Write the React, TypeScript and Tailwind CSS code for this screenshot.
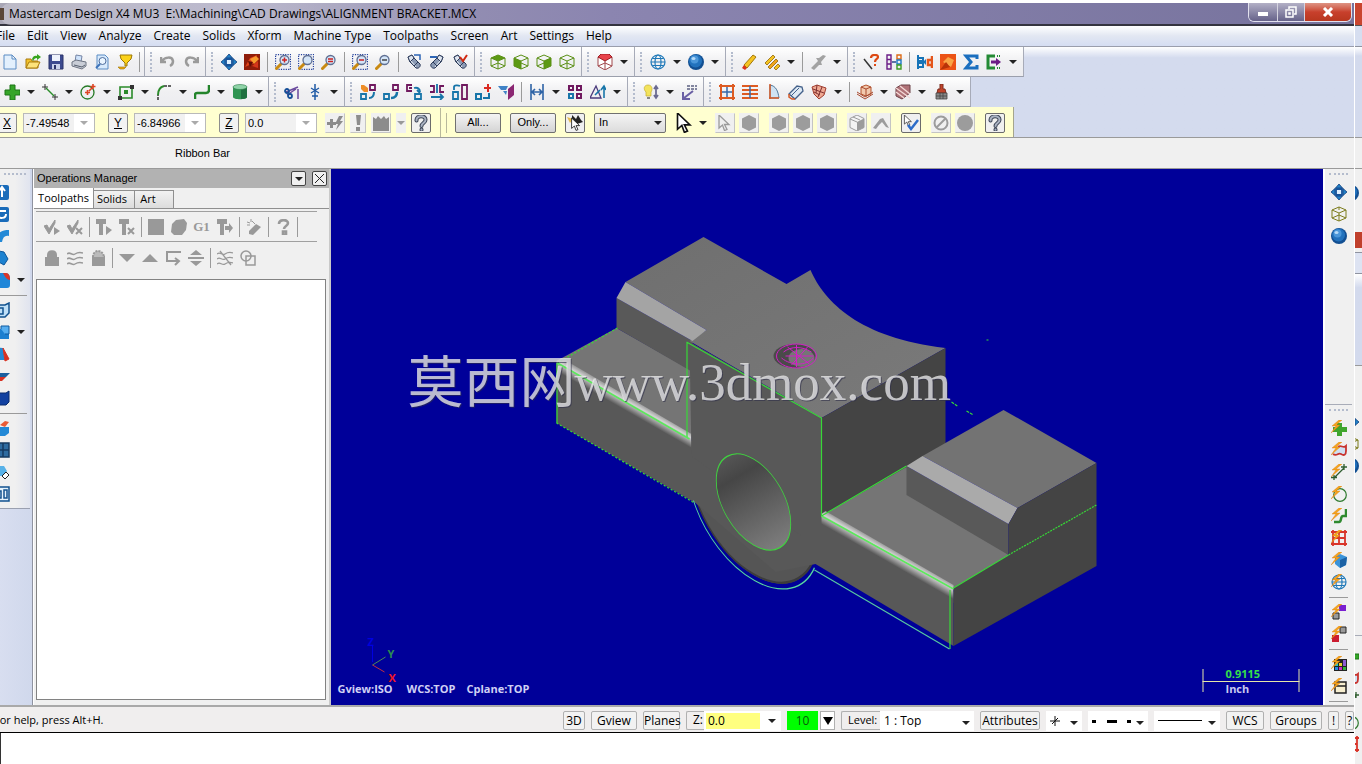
import type { ReactNode } from "react";
import clsx from "clsx";

/* ---------- icon drawings, all on a 16 x 16 grid ---------- */

const magnifier = (
  <>
    <path d="M6 10 1.5 14.500" stroke="#c98a12" strokeWidth="3" strokeLinecap="round" />
    <circle cx="9.500" cy="6" r="4.500" fill="#d3e4f7" stroke="#5f6f92" strokeWidth="1.300" />
  </>
);

const marquee = <path d="M.5 .5h15v15H.5z" fill="none" stroke="#23409c" strokeWidth="1.300" strokeDasharray="1.200 1.200" />;

const flashlight = (
  <>
    <path d="m2 3 4-2 2 3 6 6c1 2-1 5-4 4L4 8z" fill="#8b9ab4" stroke="#2f3d5c" />
    <path d="m2 3 2 5 4-4-2-3z" fill="#dfe6f0" stroke="#2f3d5c" />
    <path d="m5 7 5 6" stroke="#e6ebf2" />
    <path d="m8 12 4-4" stroke="#2f3d5c" />
  </>
);

const cubeWire = "M8 1 15 4v8l-7 3-7-3V4zM1 4l7 3 7-3M8 7v8";
const hexagon = "M8 0 15 3.500v9L8 16l-7-3.500v-9z";
const bolt = <path d="M8 0 1 6h4L0 13l9-8H5l6-5z" fill="#f5a51c" stroke="#d87a10" strokeWidth=".4" />;
const globe = (
  <g fill="none" stroke="#1e78b8" strokeWidth="1.200">
    <circle cx="8" cy="8" r="7" />
    <ellipse cx="8" cy="8" rx="3" ry="7" />
    <path d="M1 8h14M2.500 4.500h11M2.500 11.500h11" />
  </g>
);
const sphere = (
  <>
    <circle cx="8" cy="8" r="8" fill="#124f92" />
    <circle cx="7.500" cy="7" r="6.500" fill="#2272bd" />
    <circle cx="6.500" cy="5.500" r="4" fill="#4b97da" />
    <ellipse cx="5.500" cy="4.500" rx="2" ry="1.500" fill="#b5daf7" />
  </>
);
const fourWay = (
  <g fill="#2382c8" stroke="#123f7c" strokeWidth=".8">
    <path d="m8 0 3.500 4h-7zM8 16l3.500-4h-7zM0 8l4-3.500v7zM16 8l-4-3.500v7z" />
    <path d="M5 5h6v6H5z" fill="#dff0ff" stroke="#17539a" strokeWidth="1.800" />
  </g>
);
const question = (
  <g fill="none" strokeLinecap="round">
    <path d="M3.500 5.500C3 0 13 0 12.500 5c0 3-4 3-4 6" stroke="#3d4656" strokeWidth="4" />
    <path d="M8.500 14.500v.2" stroke="#3d4656" strokeWidth="4" />
    <path d="M3.500 5.500C3 0 13 0 12.500 5c0 3-4 3-4 6" stroke="#a9b2c2" strokeWidth="2" />
    <path d="M8.500 14.500v.2" stroke="#a9b2c2" strokeWidth="2" />
  </g>
);
const cursor = "M2 0v13l3.500-3 2 5.500 2.500-1-2.500-5h4.500z";

const icons: Record<string, ReactNode> = {
  new: <path d="M2 1h8l4 4v10H2zM10 1v4h4" fill="#e3f0fd" stroke="#5b8cc4" />,
  open: (
    <>
      <path d="M1 14V5h5l1 2h6v7z" fill="#f3c22b" stroke="#a97a0c" />
      <path d="m1 14 3-6h11l-3 6z" fill="#fde27a" stroke="#a97a0c" />
      <path d="M7 5c1-3 3-4 5-3V0l4 3-4 3V4c-2 0-3 1-4 3z" fill="#37a51e" />
    </>
  ),
  save: (
    <>
      <path d="M1 1h14v14H1z" fill="#3c4a8f" stroke="#2a3269" />
      <path d="M4 1h8v6H4z" fill="#eef2fb" />
      <path d="M4 10h8v5H4z" fill="#c9d1ea" />
      <path d="M6 11h2v4H6z" fill="#2a3269" />
    </>
  ),
  print: (
    <>
      <path d="m5 1 6 1-1 6H4z" fill="#cfe3fb" stroke="#7585a5" />
      <path d="m1 8 4-2 10 2v4l-4 3-10-3z" fill="#c9cdd6" stroke="#6d7482" />
      <path d="m3 11 8 2 3-2" stroke="#555d6c" fill="none" />
    </>
  ),
  preview: (
    <>
      <path d="M3 1h8l3 3v11H3z" fill="#d8eafc" stroke="#5b8cc4" />
      <circle cx="8.500" cy="7" r="3.500" fill="#eaf5ff" stroke="#4e6d9d" />
      <path d="m6 10-4 4" stroke="#3e73b9" strokeWidth="2" />
    </>
  ),
  trophy: (
    <>
      <path d="M3 1h12l-1 4-4 4v3H8V9L4 5z" fill="#fbd21a" stroke="#9c7605" />
      <path d="M1 13h8l-2 2H3z" fill="#f0a80f" stroke="#9c7605" strokeWidth=".6" />
    </>
  ),
  undo: <path d="M1 3v5h5M2 7c3-4 10-5 11 0 0 2-1 4-3 5" fill="none" stroke="#9a9a9a" strokeWidth="2.500" />,
  redo: <path d="M15 3v5h-5m4-1C11 3 4 2 3 7c0 2 1 4 3 5" fill="none" stroke="#9a9a9a" strokeWidth="2.500" />,
  fourWay,
  redTile: (
    <>
      <path d="M0 0h16v16H0z" fill="#8f1d0a" />
      <path d="M1 13 6 4l7-3-3 8z" fill="#e2431a" />
      <path d="m6 5 6-3 3 3-5 5z" fill="#f79a2d" />
      <path d="m8 12 6-5v7z" fill="#d5361a" />
      <path d="m4 7 5 1-3 5z" fill="#5e0e05" />
    </>
  ),
  zoomWin: <>{marquee}{magnifier}<path d="M7 6h5M9.500 3.500v5" stroke="#c22" strokeWidth="1.500" /></>,
  zoomSel: <>{marquee}{magnifier}</>,
  zoomFit: <>{magnifier}<path d="M7 5h5M7 7.500h5" stroke="#c22" strokeWidth="1.500" /></>,
  unzoom: <>{marquee}{magnifier}<path d="M7 6h5" stroke="#c22" strokeWidth="1.500" /></>,
  zoomOut: <>{magnifier}<path d="M7 6h5" stroke="#444" strokeWidth="1.500" /></>,
  lightA: <>{flashlight}<path d="M8 1h6v5" stroke="#2e66b5" fill="none" strokeWidth="1.500" /></>,
  lightB: <g transform="matrix(-1 0 0 1 16 0)">{flashlight}<path d="M8 3h7" stroke="#2e66b5" strokeWidth="2" /></g>,
  lightC: <>{flashlight}<path d="m8 3 3 4 4-6" stroke="#d12a12" fill="none" strokeWidth="2" /></>,
  cubeTop: <><path d="m8 1 7 3-7 3-7-3z" fill="#5d9a13" /><path d={cubeWire + "M1 12l7-3 7 3"} fill="none" stroke="#5a8f14" /></>,
  cubeLeft: <><path d="m1 4 7 3v8l-7-3z" fill="#5d9a13" /><path d={cubeWire + "M8 9l7 3"} fill="none" stroke="#5a8f14" /></>,
  cubeRight: <><path d="m15 4-7 3v8l7-3z" fill="#5d9a13" /><path d={cubeWire + "M8 9l-7 3"} fill="none" stroke="#5a8f14" /></>,
  cubeIso: <path d={cubeWire + "M1 12l7-3 7 3"} fill="none" stroke="#5a8f14" />,
  cubeOlive: <path d={cubeWire + "M8 1v3M1 12l7-3 7 3"} fill="none" stroke="#7c7c1c" />,
  cplane: (
    <>
      <path d="M1 3h14v9l-7 4-7-4zM8 7v9M1 12l7-3 7 3" fill="#fff" stroke="#a0474b" />
      <path d="m4 0h8l3 3-7 4-7-4z" fill="#e8434b" stroke="#9c1b21" />
    </>
  ),
  globe,
  sphere,
  eraser: (
    <>
      <path d="M3 11 12 1l3 2-9 11z" fill="#f5c422" stroke="#a4780a" />
      <path d="m1 14 2-3 3 3-2 2z" fill="#d9341c" />
    </>
  ),
  erasers: (
    <g stroke="#8f6409" strokeWidth=".8">
      <path d="m1 9 8-8 2 2-8 8z" fill="#f5c422" />
      <path d="m4 13 8-8 2 2-8 8z" fill="#f1a41a" />
      <path d="m10 14 4-4 2 2-4 4z" fill="#f5c422" />
    </g>
  ),
  eraserGrey: <path d="M1 14 8 7 6 4h3l4-3 3 1-5 6 1 3H9l-5 5z" fill="#a2a2a2" />,
  lineAsk: (
    <>
      <path d="m1 5 8 10" stroke="#333" strokeWidth="1.500" />
      <path d="M8 4c0-4 7-4 7-1 0 2-3 2-3 5" fill="none" stroke="#dd4914" strokeWidth="2.200" />
      <path d="M11 10h2v2h-2z" fill="#dd4914" />
    </>
  ),
  tables: (
    <g fill="none" strokeWidth="1.400">
      <path d="M1 1h4v14H1zM1 5.500h4M1 10h4" stroke="#6b1d86" />
      <path d="M11 1h4v4h-4z" stroke="#dd6a14" />
      <path d="M11 6h4v4h-4z" stroke="#1b78c4" />
      <path d="M11 11h4v4h-4z" stroke="#3c9b22" />
      <path d="M6 8h4" stroke="#1b3d84" />
    </g>
  ),
  levels: (
    <>
      <path d="M1 1v14M1 4h5v3H1M1 9h5v4H1" stroke="#1774b8" strokeWidth="2" fill="none" />
      <path d="M15 2v12M15 6h-4v5h4" stroke="#e4551b" strokeWidth="2.500" fill="none" />
      <path d="m6 8 3-3v6z" fill="#1774b8" />
    </>
  ),
  orangeTile: (
    <>
      <path d="M0 0h16v16H0z" fill="#ec5316" />
      <path d="m3 8 5-5 6 3-3 7z" fill="#f9a445" />
      <path d="m0 16 6-8 4 5z" fill="#b93308" />
    </>
  ),
  sigma: <path d="M14 5V2H3l5 6-5 6h11v-3" fill="none" stroke="#1b6fbf" strokeWidth="3" />,
  exportC: (
    <>
      <path d="M9 2H2v12h7" fill="none" stroke="#238a34" strokeWidth="3" />
      <path d="M5 8h6" stroke="#6b1d86" strokeWidth="3" />
      <path d="m10 4 5 4-5 4z" fill="#6b1d86" />
      <path d="M11 2h4M11 14h4" stroke="#238a34" strokeWidth="2" strokeDasharray="1 1" />
    </>
  ),

  plus: <path d="M6 1h5v5h5v5h-5v5H6v-5H1V6h5z" fill="#35a528" stroke="#1c7416" />,
  line: (
    <g stroke="#333" fill="none">
      <path d="M3 0v6M0 3h6M13 10v6M10 13h6" />
      <path d="m4 4 8 8" stroke="#2b8c2b" strokeWidth="1.500" />
    </g>
  ),
  arc: (
    <>
      <circle cx="7.500" cy="8.500" r="6.500" fill="none" stroke="#267a26" strokeWidth="1.300" />
      <path d="M7.500 6v5M5 8.500h5M13 0v5M10.500 2.500h5M9 7l3-3" stroke="#de4424" strokeWidth="1.600" />
    </>
  ),
  rect: (
    <>
      <path d="M2 3h12v11H2z" fill="none" stroke="#2a8a2a" strokeWidth="1.600" />
      <path d="M6 6h4v4H6z" fill="#2a8a2a" />
      <path d="M12 1h4v4h-4zM0 12h4v4H0z" fill="#333" />
    </>
  ),
  fillet: (
    <>
      <path d="M2 16v-5M8 2h8" stroke="#333" strokeWidth="1.500" strokeDasharray="3 1" />
      <path d="M2 11c0-5 2-8 6-9" fill="none" stroke="#2a8a2a" strokeWidth="2" />
    </>
  ),
  spline: <path d="M1 15v-4c0-1 0-2 2-2h9c2 0 3-1 3-3V1" fill="none" stroke="#23842b" strokeWidth="2.500" />,
  cylinder: (
    <>
      <path d="M1 3v10c0 3 14 3 14 0V3z" fill="#2f9452" />
      <path d="M9 4h6v9c0 1-2 2-6 2z" fill="#1f7040" />
      <ellipse cx="8" cy="3" rx="7" ry="2.500" fill="#8fd3a8" stroke="#2c7a49" strokeWidth=".6" />
    </>
  ),
  trim: (
    <>
      <path d="M2 8 14 3M3 11l9-6M14 5v10" stroke="#6b4a9e" strokeWidth="1.500" />
      <circle cx="3" cy="7" r="2" fill="none" stroke="#164f97" strokeWidth="1.800" />
      <circle cx="6" cy="12" r="2" fill="none" stroke="#164f97" strokeWidth="1.800" />
    </>
  ),
  breakPt: (
    <>
      <path d="M8 0v16" stroke="#1d58a5" strokeWidth="1.500" />
      <path d="m4 4 8 5M12 4 4 9M5 12h6" stroke="#1d58a5" strokeWidth="1.300" />
    </>
  ),
  xDyn: (
    <>
      <path d="M10 1h5v5h-5z" fill="none" stroke="#70195f" strokeWidth="1.800" />
      <path d="M1 10h5v5H1z" fill="none" stroke="#1775a9" strokeWidth="1.800" />
      <path d="M14 8c0 4-2 6-5 6" stroke="#1775a9" fill="none" strokeWidth="2" />
      <path d="M1 1h3l4 3v4H4L1 5z" fill="#ee8e28" />
    </>
  ),
  xMove: (
    <>
      <path d="M10 1h5v5h-5z" fill="none" stroke="#70195f" strokeWidth="1.800" />
      <path d="M1 10h5v5H1z" fill="none" stroke="#1775a9" strokeWidth="1.800" />
      <path d="M14 8c0 4-2 6-6 6" stroke="#1775a9" fill="none" strokeWidth="2.500" />
    </>
  ),
  xRot: (
    <>
      <path d="M6 1H1v6h5M3 4h3" fill="none" stroke="#70195f" strokeWidth="1.800" />
      <path d="M9 10h6v5H9z" fill="none" stroke="#1775a9" strokeWidth="1.800" />
      <path d="M8 4c4-1 6 1 6 4M11 6l3 3" stroke="#1775a9" fill="none" strokeWidth="1.800" />
    </>
  ),
  xMirror: (
    <>
      <path d="M1 2h4v6H1M15 2h-4v6h4" fill="none" stroke="#70195f" strokeWidth="1.800" />
      <path d="M8 0v9M2 13h12M11 10l3 3-3 3" fill="none" stroke="#1775a9" strokeWidth="1.800" />
    </>
  ),
  xScale: (
    <>
      <path d="M10 1h5v14h-5z" fill="none" stroke="#70195f" strokeWidth="1.800" />
      <path d="M1 8h5v7H1zM2 6V3c0-2 4-2 6-1" fill="none" stroke="#1775a9" strokeWidth="1.800" />
    </>
  ),
  xOffset: (
    <>
      <path d="M13 0v8M9 4h7" stroke="#da2a22" strokeWidth="2" />
      <path d="M1 10h5v5H1zM8 14h6V9" fill="none" stroke="#1775a9" strokeWidth="2" />
    </>
  ),
  xProject: (
    <>
      <path d="m10 5 6-5v11l-6 5z" fill="#8a2672" />
      <path d="M0 2h10L8 6H3zM5 7h4l-1 4z" fill="#3f82c6" />
    </>
  ),
  stretch: <path d="M2 0v16M14 0v16M4 8h8M6 5 3 8l3 3M10 5l3 3-3 3" fill="none" stroke="#2e63a6" strokeWidth="1.600" />,
  array: (
    <g fill="none" strokeWidth="2">
      <path d="M2 2h4v4H2zM10 2h4v4h-4zM10 10h4v4h-4z" stroke="#70195f" />
      <path d="M2 10h4v4H2z" stroke="#1775a9" />
    </g>
  ),
  drag: (
    <>
      <path d="M0 14 6 2l5 12z" fill="none" stroke="#4b3b7c" strokeWidth="1.300" />
      <path d="M14 3v11M11 6l3-4 2 4M5 11l5-5" stroke="#1775a9" strokeWidth="1.600" fill="none" />
    </>
  ),
  bulb: (
    <>
      <path d="M5 1c4 0 5 4 3 7v4H3V8C0 5 1 1 5 1z" fill="#f3e35c" stroke="#c4ad2c" strokeWidth=".7" />
      <path d="M4 13h3v2H4z" fill="#888" />
      <path d="M13 3v10M11 5l2-3 2 3M11 11l2 3 2-3" fill="none" stroke="#6a6a92" strokeWidth="1.800" />
    </>
  ),
  dimension: (
    <>
      <path d="M6 2h10M6 5h10" stroke="#5d6282" strokeDasharray="3 1" strokeWidth="1.300" />
      <path d="M12 7 3 14M2 8v7h7" fill="none" stroke="#6a5fa4" strokeWidth="2" />
    </>
  ),
  gridRed: (
    <>
      <path d="M8 2v12M2 8h12" stroke="#3568a8" strokeWidth="1.500" />
      <path d="M2 0v16M14 0v16M0 2h16M0 14h16" stroke="#dd5b22" strokeWidth="2" />
    </>
  ),
  ruled: (
    <>
      <path d="M0 2h16M0 6h16M0 10h16M0 14h16" stroke="#dd5b22" strokeWidth="1.800" />
      <path d="M8 2v12" stroke="#3568a8" strokeWidth="1.500" />
    </>
  ),
  revolve: (
    <>
      <path d="M5 1c6 1 8 6 9 13H5z" fill="#cfe2f2" stroke="#4e7698" />
      <path d="M5 0v15M4 14h10" stroke="#d65a26" strokeWidth="1.500" />
    </>
  ),
  sweep: (
    <>
      <path d="m1 10 8-8 5 1 1 4-8 8z" fill="#dfeaf5" stroke="#44618a" strokeWidth="1.300" />
      <path d="m3 12 8-8" stroke="#44618a" />
      <path d="M1 10v3l3 2h3" stroke="#d65a26" fill="none" strokeWidth="1.500" />
    </>
  ),
  net: (
    <>
      <path d="m1 3 5-2 9 3-2 7-5 4-5-5z" fill="#f0a892" stroke="#a03d2f" />
      <path d="m2 5 11 4M6 1l-1 8M11 3 7 13M3 8l6 3" stroke="#7e3030" fill="none" />
    </>
  ),
  fence: (
    <>
      <path d="m4 3 5-2 5 2v7l-5 2-5-2z" fill="#f2c9ae" stroke="#b4522c" />
      <path d="M4 3l5 2 5-2M9 5v7M0 10l8 5 8-5M0 8l8 5 8-5" fill="none" stroke="#a8482c" />
    </>
  ),
  trimSurf: (
    <>
      <path d="m1 4 5-3h9v8l-8 6-6-3z" fill="#b07378" stroke="#6c4248" />
      <path d="m1 4 14 10M5 2l10 8M1 8l8 6" stroke="#f5d9d7" strokeWidth="1.300" />
    </>
  ),
  tower: (
    <>
      <path d="M7 0h3v5h2l1 4H4l1-4h2z" fill="#c1442b" stroke="#7d2c1e" />
      <path d="M3 9h11v6H3zM3 12h11M7 9v6M10 9v6" fill="#8a8a8a" stroke="#444" strokeWidth=".8" />
    </>
  ),

  fastPoint: <path d="M0 7h3V4h3v3h3v3H6v3H3v-3H0zM12 1l4 0-3 5h3L9 15l2-6H8z" fill="#8c8c8c" />,
  bang: <path d="M6 0h5l-1 10H7zM6 12h4v4H6z" fill="#8c8c8c" />,
  block: <path d="m0 2 3 2 2-3 3 3 3-3 2 3 3-2v14H0z" fill="#8c8c8c" />,
  help: question,
  cursorDark: (
    <>
      <path d="m5 0 4 4 2-4 3 5 2 2-6 2-5-3z" fill="#222" />
      <path d="m0 2 6 2-3 4z" fill="#e6bd52" />
      <path d={cursor} fill="#fff" stroke="#111" transform="translate(3 3) scale(.8)" />
    </>
  ),
  cursor: <path d={cursor} fill="#fff" stroke="#111" strokeWidth="1.300" />,
  cursorGrey: <path d={cursor} fill="#eee" stroke="#9a9a9a" strokeWidth="1.300" />,
  hex: <path d={hexagon} fill="#9c9c9c" />,
  cubeGrey: (
    <>
      <path d={hexagon} fill="#f4f4f4" stroke="#9c9c9c" />
      <path d="M8 7v9l7-3.500v-9z" fill="#9c9c9c" />
      <path d="m1 4 7 3M4 2l7 3" stroke="#9c9c9c" />
    </>
  ),
  bend: <path d="M0 13 7 4l3-1 6 10-3-1-4-5-3 3-3 4z" fill="#9c9c9c" />,
  cursorCheck: (
    <>
      <path d={cursor} fill="#fff" stroke="#222" transform="scale(.7)" />
      <path d="m5 10 3 4 7-9" fill="none" stroke="#2c6cc8" strokeWidth="2.500" />
    </>
  ),
  forbid: <g fill="none" stroke="#9c9c9c" strokeWidth="2"><circle cx="8" cy="8" r="6.500" /><path d="m3.500 12.500 9-9" /></g>,
  disc: <circle cx="8" cy="8" r="8" fill="#9c9c9c" />,

  checkGo: <><path d="m0 7 3-1 2 4 6-9v3L5 15z" fill="#999" stroke="#999" /><path d="m10 8 6 4-6 4z" fill="#999" /></>,
  checkX: <><path d="m0 7 3-1 2 4 6-9v3L5 15z" fill="#999" stroke="#999" /><path d="m9 9 6 6m0-6-6 6" stroke="#999" strokeWidth="2" /></>,
  toolGo: <><path d="M0 0h10v5H7v11H3V5H0z" fill="#999" /><path d="m10 7 6 4-6 5z" fill="#999" /></>,
  toolX: <><path d="M0 0h10v5H7v11H3V5H0z" fill="#999" /><path d="m9 9 6 6m0-6-6 6" stroke="#999" strokeWidth="2" /></>,
  square: <path d="M0 0h16v16H0z" fill="#999" />,
  solidBlob: <path d="m5 1 8-1 3 4-1 7-4 5H3l-3-3 1-8z" fill="#999" />,
  toolArrow: <><path d="M0 0h10v5H7v11H3V5H0z" fill="#999" /><path d="M8 7h4V4l4 5-4 5v-3H8z" fill="#999" /></>,
  dynamite: <><path d="m3 12 7-7 5 3-8 8-4-1z" fill="#999" /><path d="m9 5-3-3M1 3l3 1M5 0v3M1 6h3" stroke="#999" /></>,
  ask: <path d="M4 5c0-5 9-5 9-1 0 3-4 3-4 6M8 12.500h3v3H8z" fill="none" stroke="#999" strokeWidth="2.600" />,
  lock: <><path d="M1 7h14v9H1z" fill="#999" /><path d="M4 8V5c0-5 8-5 8 0v3" fill="#999" stroke="#999" strokeWidth="2" /></>,
  waves: <path d="M0 4c3-3 5 2 8 0s5-2 8-1M0 9c3-3 5 2 8 0s5-2 8-1M0 14c3-3 5 2 8 0s5-2 8-1" fill="none" stroke="#999" strokeWidth="1.500" />,
  ghost: <><path d="M2 6h13v10H2z" fill="#999" /><path d="M3 7c0-8 10-8 11 0" fill="#bbb" stroke="#999" strokeWidth="2" strokeDasharray="2 1" /></>,
  down: <path d="M0 4h16l-8 8z" fill="#999" />,
  up: <path d="M0 12h16L8 4z" fill="#999" />,
  loop: <path d="M16 2H2v9h12M10 8l4 3-4 4" fill="none" stroke="#999" strokeWidth="2" />,
  updown: <path d="m8 0 6 5H2zM8 16l6-5H2zM0 7h16v2H0z" fill="#999" />,
  wavesX: <path d="M0 4c3-3 5 2 8 0s5-2 8-1M0 9c3-3 5 2 8 0s5-2 8-1M0 14c3-3 5 2 8 0s5-2 8-1M3 1l11 14" fill="none" stroke="#999" strokeWidth="1.300" />,
  overlap: <g fill="none" stroke="#999" strokeWidth="1.500"><circle cx="6" cy="6" r="5" /><path d="M6 6h9v9H6z" /></g>,

  solidUp: <><rect y="1" width="15" height="15" rx="2" fill="#1a6cba" /><path d="M8 13V4M5 7l3-4 3 4" stroke="#fff" strokeWidth="2" fill="none" /></>,
  solidTurn: <><rect y="1" width="15" height="15" rx="2" fill="#1a6cba" /><path d="M4 9c1 4 8 4 8-1M6 5h6" stroke="#fff" strokeWidth="2" fill="none" /></>,
  solidSweep: <path d="M1 14C2 5 7 2 15 2v6c-4-1-6 1-7 6z" fill="#2389d6" />,
  solidLoft: <path d="m5 1 5 1 4 7-4 6-7-4z" fill="#1d82d0" stroke="#0d579b" />,
  solidFillet: <><path d="M0 1h11c4 0 5 3 5 6v6c0 2-1 3-3 3H0z" fill="#1f86d8" /><path d="M9 1h3c3 0 4 3 4 7-3 0-5-3-7-7z" fill="#dd3526" /></>,
  solidShell: <path d="M1 3h10l4-2v10l-4 4H1zM4 6h5v6H4z" fill="#bfe0f8" stroke="#12528f" strokeWidth="1.500" />,
  solidBool: <><path d="M0 5h15v10H0z" fill="#1c7fd0" /><path d="M7 5V2h8v8h-4" fill="#56aef0" stroke="#0f5aa0" /></>,
  solidDraft: <><path d="m1 1 8 1 2 12H0z" fill="#2389d6" /><path d="M9 2 15 13l-4 2z" fill="#d83222" stroke="#d83222" /></>,
  solidTrim: <><path d="M0 5h16l-4 4H0z" fill="#1c5f9e" /><path d="M0 9h12l-4 4H0z" fill="#d83222" /></>,
  solidThick: <path d="M0 3h12l3-2v11l-3 3H0z" fill="#1241a0" stroke="#0a2d6c" />,
  solidPaint: <><path d="M0 7h15v6l-4 3H0z" fill="#2389d6" /><path d="m6 5 5-4 4 1-4 5z" fill="#ea5b35" /></>,
  solidLib: <path d="M1 1h14v14H1zM9 1v14M1 8h14" fill="#2d6ba0" stroke="#143a60" strokeWidth="1.500" />,
  solidFind: <><path d="M1 2h9l3 5-4 5H1z" fill="#58b2e8" /><path d="m8 12 3 3 4-4-3-3z" fill="#fff" stroke="#222" /></>,
  solidView: <path d="M1 1h14v14H1zM4 5h3v7H4zM10 4h3v8h-3z" fill="#e5f3fd" stroke="#12528f" strokeWidth="1.500" />,

  qPlus: <><path d="M6 3h5v4h5v5h-5v4H6v-4H2V7h4z" fill="#3fa52c" />{bolt}</>,
  qSurf: <><path d="M2 12c4 3 5-2 8 0s5 1 5-3V4c-3 3-5-2-8 1" fill="#cfe0f2" stroke="#c8332e" strokeWidth="1.800" />{bolt}</>,
  qLine: <><path d="m4 13 9-9M13 0v6M10 3h6M3 11v5M0 13.500h6" stroke="#2f5d2f" strokeWidth="1.300" />{bolt}</>,
  qArc: <><circle cx="9" cy="9" r="6.300" fill="none" stroke="#2f7a2f" strokeWidth="1.200" />{bolt}</>,
  qSpline: <><path d="M3 14h5c3 0 1-6 4-6h3V1" fill="none" stroke="#2f8a2f" strokeWidth="2.500" />{bolt}</>,
  qGrid: <><path d="M2 0v16M14 0v16M0 2h16M0 14h16M8 2v12M2 8h12" stroke="#d9352a" strokeWidth="1.800" />{bolt}</>,
  qSolid: <><path d="m9 2 7 3-1 8-6 3-5-4V5z" fill="#3a93d9" /><path d="m9 8 7-3-1 8-6 3z" fill="#1b62a5" />{bolt}</>,
  qGlobe: <>{globe}{bolt}</>,
  qPurple: <><path d="M8 1h7v6H8z" fill="#7a1fd0" /><path d="M2 9h6v6H2z" fill="#999" stroke="#222" />{bolt}</>,
  qRed: <><path d="M9 1h6v6H9z" fill="#999" stroke="#222" /><path d="M1 9h7v7H1z" fill="#cb1c30" />{bolt}</>,
  qColors: (
    <>
      <path d="M3 3h13v12H3z" fill="#222" />
      <path d="M4 7h3v3H4z" fill="#25c7c2" /><path d="M8 7h3v3H8z" fill="#e2d22d" /><path d="M12 4h3v6h-3z" fill="#8a5ad0" />
      <path d="M4 11h3v3H4z" fill="#2789e0" /><path d="M8 11h3v3H8z" fill="#cf2bc2" /><path d="M12 11h3v3h-3z" fill="#31b33a" />
      {bolt}
    </>
  ),
  qFrame: <><path d="M4 4h11v11H4zM4 8h11" fill="#f7efd0" stroke="#222" strokeWidth="1.500" />{bolt}</>,
};

const labels: Record<string, string> = { v: "More options", help: "Help", undo: "Undo", redo: "Redo", save: "Save", open: "Open", print: "Print", new: "New" };

function Glyph({ name, size = "size-4" }: { name: string; size?: string }) {
  return (
    <svg viewBox="0 0 16 16" className={clsx(size, "shrink-0")} aria-hidden="true">
      {icons[name]}
    </svg>
  );
}

function Caret({ className = "text-[#222]" }: { className?: string }) {
  return (
    <svg viewBox="0 0 8 4" className={clsx("h-1 w-2 shrink-0", className)} aria-hidden="true">
      <path d="M0 0h8L4 4z" fill="currentColor" />
    </svg>
  );
}

/* "|" is a separator, "v" a drop-down arrow, anything else an icon */
function Tools({ items, sep = "w-2" }: { items: string[]; sep?: string }) {
  return (
    <>
      {items.map((name, i) =>
        name === "|" ? (
          <span key={i} className={clsx("flex h-5 justify-center", sep)}>
            <span className="w-px bg-[#9a9a9a]" />
          </span>
        ) : name === "v" ? (
          <button key={i} aria-label={labels.v} className="flex h-6 w-[15px] items-center justify-center">
            <Caret />
          </button>
        ) : (
          <button key={i} aria-label={labels[name] ?? name} className="flex h-6 w-[23px] items-center justify-center">
            {name === "g1" ? (
              <span className="font-['Liberation_Serif',serif] text-[13px] font-bold text-[#999]">G1</span>
            ) : (
              <Glyph name={name} />
            )}
          </button>
        ),
      )}
    </>
  );
}

function ToolGroup({ items, grip = true }: { items: string[]; grip?: boolean }) {
  return (
    <div
      className={clsx(
        "flex h-[30px] shrink-0 items-center border-r border-b border-r-[#a7abb8] border-b-[#9b9fac] bg-linear-to-b from-white via-[#f0f0f2] to-[#ececf0]",
        grip ? "pr-[3px]" : "pr-0.5",
      )}
    >
      {grip && (
        <span className="flex w-[11px] justify-center">
          <span className="h-5 border-l-2 border-dotted border-[#b4bccd]" />
        </span>
      )}
      <Tools items={items} sep={grip ? "w-2" : "w-1.5"} />
    </div>
  );
}

const fileTools = ["new", "open", "save", "print", "preview", "trophy", "|"];
const viewBars = [
  ["undo", "redo"],
  ["fourWay", "redTile", "|", "zoomWin", "zoomSel", "zoomFit", "|", "unzoom", "zoomOut", "|", "lightA", "lightB", "lightC"],
  ["cubeTop", "cubeLeft", "cubeRight", "cubeIso"],
  ["cplane", "v"],
  ["globe", "v", "sphere", "v"],
  ["eraser", "erasers", "v", "|", "eraserGrey", "v"],
  ["lineAsk", "tables", "|", "levels", "orangeTile", "sigma", "exportC", "v"],
];
const createTools = ["plus", "v", "line", "v", "arc", "v", "rect", "v", "fillet", "v", "spline", "v", "cylinder", "v"];
const xformBars = [
  ["trim", "breakPt", "v"],
  ["xDyn", "xMove", "xRot", "xMirror", "xScale", "xOffset", "xProject", "|", "stretch", "v", "array", "drag", "v"],
  ["bulb", "v", "dimension"],
  ["gridRed", "ruled", "revolve", "sweep", "net", "v", "|", "fence", "v", "trimSurf", "v", "tower", "v"],
];

const menus = ["File", "Edit", "View", "Analyze", "Create", "Solids", "Xform", "Machine Type", "Toolpaths", "Screen", "Art", "Settings", "Help"];

function TitleBar() {
  return (
    <header className="flex h-[26px] items-start justify-between border-t-3 border-b-2 border-t-white border-b-[#34343f] bg-linear-to-r from-[#a9a7b6] via-[#8b85b0] via-45% to-[#77739d]">
      <div className="flex items-center rounded-full bg-linear-to-r from-[#c9c7d2]/60 via-[#c9c7d8]/70 to-transparent">
        <span className="h-3 w-1 bg-[#5a4638]" />
        <h1 className="pl-[5px] text-[12px] leading-[22px] whitespace-pre text-black">
          {"Mastercam Design X4 MU3  E:\\Machining\\CAD Drawings\\ALIGNMENT BRACKET.MCX"}
        </h1>
      </div>
      <div className="mr-0.5 flex h-[19px] overflow-hidden rounded-b-md border border-t-0 border-[#e2e1ee] text-white">
        <button aria-label="Minimize" className="flex w-[29px] items-center justify-center border-r border-[#d5d4e0] bg-linear-to-b from-[#b3b0c6] to-[#67638a]">
          <span className="mt-1 h-1 w-2.5 bg-white" />
        </button>
        <button aria-label="Restore" className="flex w-[27px] items-center justify-center border-r border-[#d5d4e0] bg-linear-to-b from-[#b3b0c6] to-[#67638a]">
          <svg viewBox="0 0 12 12" className="size-3" fill="none" stroke="#fff" strokeWidth="1.500">
            <path d="M4 3V1h7v7H9M1 4h7v7H1zM4 7h1v1H4z" />
          </svg>
        </button>
        <button aria-label="Close" className="flex w-[46px] items-center justify-center bg-linear-to-b from-[#dd9384] via-[#c8402c] to-[#b8371f]">
          <svg viewBox="0 0 12 10" className="h-2.5 w-3" stroke="#fff" strokeWidth="3">
            <path d="m2 1 8 8M10 1 2 9" />
          </svg>
        </button>
      </div>
    </header>
  );
}

function AxisField({ axis, value }: { axis: string; value: string }) {
  return (
    <div className="flex items-center gap-1.5">
      <button className="size-5 rounded-xs border border-[#8d8d8d] bg-[#f2f2f2] text-[12px] leading-none underline">{axis}</button>
      <div className="flex h-5 w-[72px] items-center border border-[#b9b9b9] bg-white">
        <input aria-label={`${axis} coordinate`} defaultValue={value} className="h-full w-0 flex-1 bg-[#f1f1f1] pl-0.5 text-[11px]" />
        <button aria-label={`${axis} history`} className="flex w-5 justify-center">
          <Caret className="text-[#aaa]" />
        </button>
      </div>
    </div>
  );
}

function Boxed({ name, dark = false, width = "w-5" }: { name: string; dark?: boolean; width?: string }) {
  return (
    <button
      aria-label={labels[name] ?? name}
      className={clsx(
        "flex h-5 shrink-0 items-center justify-center border bg-[#f0f0f0]",
        width,
        dark ? "rounded-xs border-[#6b6b6b]" : "border-transparent border-r-[#c4c4c4] border-b-[#c4c4c4]",
      )}
    >
      <Glyph name={name} />
    </button>
  );
}

function SelectionBar() {
  return (
    <div className="flex h-[30px] w-fit items-center border-r border-[#a5a58c] bg-[#ffffd0] pt-px pr-2 font-['Liberation_Sans',Arial,sans-serif]">
      <div className="-ml-[3px] flex w-[443px] items-center">
        <div className="flex gap-[13px]">
          <AxisField axis="X" value="-7.49548" />
          <AxisField axis="Y" value="-6.84966" />
          <AxisField axis="Z" value="0.0" />
        </div>
        <div className="ml-2 flex items-center gap-[5px]">
          <Boxed name="fastPoint" />
          <Boxed name="bang" width="w-4" />
          <Boxed name="block" />
          <button aria-label="Autocursor options" className="flex h-5 w-2.5 items-center justify-center bg-[#f0f0f0]">
            <Caret className="text-[#999]" />
          </button>
          <Boxed name="help" dark />
        </div>
      </div>
      <div className="flex h-full items-center border-l border-[#b8b89c] pl-[5px]">
        <span className="h-5 w-px bg-[#b8b89c]" />
        <div className="ml-2 flex items-center gap-[9px] text-[11px]">
          <button className="h-5 w-[46px] rounded-xs border border-[#707070] bg-linear-to-b from-[#f4f4f4] to-[#d4d4d4] leading-none">All...</button>
          <button className="h-5 w-[46px] rounded-xs border border-[#707070] bg-linear-to-b from-[#f4f4f4] to-[#d4d4d4] leading-none">Only...</button>
          <Boxed name="cursorDark" dark />
          <div className="relative">
            <select aria-label="Window selection" className="h-5 w-[72px] appearance-none rounded-xs border border-[#707070] bg-linear-to-b from-[#f4f4f4] to-[#dcdcdc] pl-1 leading-none">
              <option>In</option>
            </select>
            <span className="pointer-events-none absolute top-2 right-1">
              <Caret />
            </span>
          </div>
        </div>
      </div>
      <button aria-label="Select" className="ml-[9px] flex h-6 w-5 items-center justify-center">
        <Glyph name="cursor" size="size-5" />
      </button>
      <button aria-label={labels.v} className="mr-1 flex h-6 w-4 items-center justify-center">
        <Caret />
      </button>
      <div className="flex gap-2.5">
        <div className="flex gap-1"><Boxed name="cursorGrey" /><Boxed name="hex" /></div>
        <div className="flex gap-1"><Boxed name="hex" /><Boxed name="hex" /><Boxed name="hex" /></div>
        <div className="flex gap-1"><Boxed name="cubeGrey" /><Boxed name="bend" /></div>
        <Boxed name="cursorCheck" dark />
        <div className="flex gap-1"><Boxed name="forbid" /><Boxed name="disc" /></div>
        <Boxed name="help" dark />
      </div>
    </div>
  );
}

function SolidsToolbar() {
  const rows = [
    "solidUp", "solidTurn", "solidSweep", "solidLoft", "solidFillet>", "-",
    "solidShell", "solidBool>", "solidDraft", "solidTrim", "solidThick", "-",
    "solidPaint", "solidLib", "solidFind", "solidView",
  ];
  return (
    <div className="w-[33px] shrink-0 overflow-hidden border-r border-[#8f93a0] bg-linear-to-r from-[#d8def0] to-[#d0d8ec]">
      <div className="mr-0.5 border-b border-[#9aa0b0] bg-linear-to-r from-[#f0f0f0] via-[#f0f0f0] to-[#e0e4ef] pb-[3px]">
        <Grip />
        {rows.map((row, i) =>
          row === "-" ? (
            <span key={i} className="flex h-2 items-center"><span className="h-px w-[27px] bg-[#9a9a9a]" /></span>
          ) : (
            <div key={i} className="-ml-1.5 flex h-[22px] items-center gap-[7px]">
              <button aria-label={row.replace(">", "")}><Glyph name={row.replace(">", "")} /></button>
              {row.endsWith(">") && <button aria-label={labels.v}><Caret /></button>}
            </div>
          ),
        )}
      </div>
    </div>
  );
}

function Grip() {
  return <div className="mx-1 h-3 pt-1"><div className="border-t-2 border-dotted border-[#b4bccd]" /></div>;
}

function OperationsManager() {
  return (
    <section className="flex w-[298px] shrink-0 flex-col border-r-2 border-l border-r-[#c9c9c9] border-l-white bg-[#f0f0f0]">
      <div className="flex h-[19px] items-center justify-between bg-[#b2b2b2] pr-0.5 pl-[3px] font-['Liberation_Sans',Arial,sans-serif]">
        <h2 className="text-[11px]">Operations Manager</h2>
        <div className="flex gap-1.5">
          <button aria-label="Panel menu" className="flex size-[15px] items-center justify-center rounded-xs border border-[#444] bg-[#f0f0f0]"><Caret /></button>
          <button aria-label="Close panel" className="flex size-[15px] items-center justify-center rounded-xs border border-[#444] bg-[#f0f0f0]">
            <svg viewBox="0 0 9 9" className="size-[9px]" stroke="#222"><path d="m0 0 9 9M9 0 0 9" /></svg>
          </button>
        </div>
      </div>
      <div role="tablist" className="flex h-[21px] items-end border-b border-[#8f8f8f] text-[11px]">
        <button role="tab" aria-selected="true" className="h-full w-[60px] border-r border-[#8f8f8f] bg-white">Toolpaths</button>
        <button role="tab" aria-selected="false" className="h-[18px] w-[41px] border-t border-r border-[#8f8f8f] bg-linear-to-b from-[#f2f2f2] to-[#dcdcdc] pr-1">Solids</button>
        <button role="tab" aria-selected="false" className="h-[18px] w-[39px] border-t border-r border-[#8f8f8f] bg-linear-to-b from-[#f2f2f2] to-[#dcdcdc] pr-3">Art</button>
      </div>
      <div className="mt-0.5 mr-3 ml-0.5">
        <div className="flex h-[31px] items-center border-y border-[#a0a0a0] pl-1">
          <Tools sep="w-1.5" items={["checkGo", "checkX", "|", "toolGo", "toolX", "|", "square", "solidBlob", "g1", "toolArrow", "|", "dynamite", "|", "ask", "|"]} />
        </div>
        <div className="flex h-[31px] items-center pl-1">
          <Tools sep="w-1.5" items={["lock", "waves", "ghost", "|", "down", "up", "loop", "updown", "|", "wavesX", "overlap"]} />
        </div>
      </div>
      <div className="mt-1.5 mr-[3px] mb-[5px] ml-0.5 flex-1 border border-[#828282] bg-white" />
    </section>
  );
}

function Viewport() {
  return (
    <main className="relative min-w-0 flex-1 overflow-hidden bg-[#000099]">
      <svg viewBox="332 169 991 536" preserveAspectRatio="xMidYMid meet" className="absolute inset-0 size-full" role="img" aria-label="Alignment bracket, isometric view">
        <defs>
          <linearGradient id="bore" x1="0" y1="0" x2="1" y2="1">
            <stop offset="0" stopColor="#646464" />
            <stop offset=".3" stopColor="#464646" />
            <stop offset="1" stopColor="#8c8c8c" />
          </linearGradient>
          <linearGradient id="topFace" x1="0" y1="0" x2="1" y2="1">
            <stop offset="0" stopColor="#6f6f6f" />
            <stop offset="1" stopColor="#7a7a7a" />
          </linearGradient>
          <linearGradient id="leftFillet" gradientUnits="userSpaceOnUse" x1="628" y1="393" x2="620" y2="407">
            <stop offset="0" stopColor="#757575" />
            <stop offset=".45" stopColor="#d2d2d2" />
            <stop offset="1" stopColor="#585858" />
          </linearGradient>
          <linearGradient id="rightFillet" gradientUnits="userSpaceOnUse" x1="893" y1="546" x2="885" y2="560">
            <stop offset="0" stopColor="#757575" />
            <stop offset=".45" stopColor="#d2d2d2" />
            <stop offset="1" stopColor="#585858" />
          </linearGradient>
        </defs>

        {/* front faces and hub */}
        <circle r="73" fill="#555" transform="matrix(.866 .5 0 1 754 502)" />
        <circle r="73" fill="none" stroke="#3c3c3c" strokeWidth="2" transform="matrix(.866 .5 0 1 754 501)" />
        <path d="M557 363 692 441V343L822 418v98l132 76v54l-138-82-40 8-80-69-139-80z" fill="#585858" />

        {/* left pad */}
        <path d="m617 328 76 43v66L557 361z" fill="#757575" />
        <path d="m617 298 76 43v31l-76-44z" fill="#595959" />
        <path d="m562 358 130 76v18L557 373v-12z" fill="url(#leftFillet)" />

        {/* centre block */}
        <path d="M690 342 822 418v98l-20 20-110-80z" fill="#585858" />
        <path d="m704 237 83 47 24-14c14 32 49 68 135 78L822 418 690 341l17-11-81-48z" fill="url(#topFace)" />
        <path d="m626 282 81 48-14 11-76-43z" fill="#a4a4a4" />
        <path d="m822 418 124-70v96l-39 24-85 49z" fill="#444" />

        {/* right pad */}
        <path d="m822 516 85-49 102 88-55 34z" fill="#757575" />
        <path d="m826 511 128 74v18l-132-77v-12z" fill="url(#rightFillet)" />
        <path d="m923 456 81-46 93 53-79 45z" fill="#737373" />
        <path d="m907 466 102 58v31l-102-60z" fill="#595959" />
        <path d="m923 456 95 52-9 16-102-58z" fill="#aaa" />
        <path d="m1018 508 79-45v103l-143 80v-58l55-33v-31z" fill="#444" />

        {/* bore */}
        <circle r="43" fill="url(#bore)" stroke="#3fd43f" transform="matrix(.866 .5 0 1 754 502)" />

        {/* wireframe */}
        <g fill="none" stroke="#37d837" strokeWidth="1.200">
          <path d="M557.500 363v60M687.500 342v96M687 342l135 76v98M950.500 590v59" />
          <path d="m558 363 132 76M822 516l132 73" strokeWidth="1.500" stroke="#5bea5b" />
          <path d="m822 516 85-50M954 588l55-33" />
          <path d="m1009 555 88-50" strokeDasharray="2 1" />
          <path d="m557 423 138 80M618 328l-60 35" strokeDasharray="2 2" />
          <path d="m815 570 135 79" stroke="#58c8a0" />
          <path d="M-69.300 31.200A76 76 0 0 0 70.400 28.500" transform="matrix(.866 .5 0 1 754 504)" stroke="#58d8a0" />
          <path d="m952 402 6 4M967 411l7 4M987 340h2" strokeDasharray="3 1" />
        </g>

        {/* tapped hole */}
        <ellipse cx="795" cy="356" rx="21" ry="12" fill="#4a4a4a" />
        <ellipse cx="802" cy="358" rx="13" ry="9" fill="#757575" />
        <g fill="none" stroke="#d21fc6">
          <ellipse cx="797" cy="356" rx="20" ry="12" />
          <path d="M784 352c8-6 18-6 28 0M782 358c10 8 24 8 32 0M788 347l22 17M808 347l-16 18M797 345v22M786 356h28" />
        </g>

        {/* watermark */}
        <g fill="#30304a" opacity=".6">
          <text x="409" y="403" className="font-['Noto_Sans_CJK_SC',sans-serif] text-[56px]">莫西网</text>
          <text x="576" y="401" className="font-['Liberation_Serif',serif] text-[53px]">www.3dmox.com</text>
        </g>
        <g fill="#f0f0f0" opacity=".75">
          <text x="408" y="402" className="font-['Noto_Sans_CJK_SC',sans-serif] text-[56px]">莫西网</text>
          <text x="575" y="400" className="font-['Liberation_Serif',serif] text-[53px]">www.3dmox.com</text>
        </g>

        {/* gnomon and scale bar */}
        <path d="M373 662v-16" stroke="#0000e0" />
        <path d="m373 665 13-8" stroke="#4a8a5a" />
        <path d="m373 665 12 7" stroke="#c03040" />
        <g className="text-[11px] font-bold">
          <text x="368" y="646" fill="#0000e0">Z</text>
          <text x="388" y="658" fill="#2c8c50">Y</text>
          <text x="389" y="682" fill="#f01828">X</text>
        </g>
        <path d="M1203.500 669v23M1299.500 669v23M1203 681.500h97" stroke="#e6e6a8" />
        <g className="text-[11px] font-bold">
          <text x="1226" y="678" fill="#35e04a">0.9115</text>
          <text x="1226" y="693" fill="#c8c8f0">Inch</text>
          <g fill="#d0d0f4">
            <text x="338" y="693">Gview:ISO</text>
            <text x="407" y="693">WCS:TOP</text>
            <text x="467" y="693">Cplane:TOP</text>
          </g>
        </g>
      </svg>
    </main>
  );
}

function QuickMasks() {
  const masks = ["qPlus", "qSurf", "qLine", "qArc", "qSpline", "qGrid", "qSolid", "qGlobe", "-", "qPurple", "qRed", "-", "qColors", "qFrame", "-"];
  return (
    <div className="w-[31px] shrink-0 border-l-2 border-white bg-[#f0f0f0] pr-0.5">
      <div className="h-[236px] border-b border-[#a8acb8]">
        <Grip />
        {["fourWay", "cubeOlive", "sphere"].map((name) => (
          <button key={name} aria-label={name} className="flex h-[22px] w-full items-center justify-center"><Glyph name={name} /></button>
        ))}
      </div>
      <Grip />
      {masks.map((name, i) =>
        name === "-" ? (
          <span key={i} className="flex h-2 items-center justify-center"><span className="h-px w-[19px] bg-[#9a9a9a]" /></span>
        ) : (
          <button key={i} aria-label={name} className="flex h-[22px] w-full items-center justify-center"><Glyph name={name} /></button>
        ),
      )}
    </div>
  );
}

function StatusButton({ children, width }: { children: ReactNode; width: string }) {
  return <button className={clsx("h-[19px] shrink-0 rounded-xs border border-[#b0b0b0] bg-[#f2f2f2] text-center leading-none whitespace-nowrap", width)}>{children}</button>;
}

function StyleSelect({ label, width, children }: { label: string; width: string; children: ReactNode }) {
  return (
    <div className={clsx("relative flex h-5 shrink-0 items-center bg-white pl-1", width)}>
      {children}
      <select aria-label={label} className="absolute inset-0 size-full appearance-none opacity-0"><option>{label}</option></select>
      <span className="pointer-events-none absolute top-2.5 right-1"><Caret /></span>
    </div>
  );
}

function StatusBar() {
  return (
    <footer className="flex h-[28px] items-center justify-between overflow-hidden border-t-2 border-b border-t-[#a9a9a9] border-b-black bg-[#f0eeee] pt-0.5 text-[12px]">
      <p className="-ml-1.5 text-[11px]">For help, press Alt+H.</p>
      <div className="flex items-center gap-1.5">
        <StatusButton width="w-[22px]">3D</StatusButton>
        <StatusButton width="w-[46px]">Gview</StatusButton>
        <StatusButton width="w-[37px]">Planes</StatusButton>
        <div className="flex items-center">
          <label htmlFor="depth" className="h-[19px] w-[18px] rounded-l-xs border border-r-0 border-[#b0b0b0] pl-1.5 leading-4">Z:</label>
          <div className="flex h-5 w-[77px] items-center bg-white pl-0.5">
            <input id="depth" defaultValue="0.0" className="h-4 w-[54px] bg-[#ffff80] pl-0.5 text-[12px]" />
            <button aria-label="Depth history" className="ml-2"><Caret /></button>
          </div>
        </div>
        <div className="flex h-[19px] items-stretch">
          <button aria-label="Color 10" className="w-[31px] bg-[#00ff00] leading-none text-[#0a5a0a]">10</button>
          <button aria-label="Pick color" className="ml-0.5 flex w-[15px] items-center justify-center border border-[#b0b0b0] bg-white">
            <svg viewBox="0 0 10 8" className="h-2 w-2.5"><path d="M0 0h10L5 8z" /></svg>
          </button>
        </div>
        <div className="flex items-center">
          <label htmlFor="level" className="h-[19px] w-[39px] rounded-l-xs border border-r-0 border-[#b0b0b0] pl-1.5 text-[11px] leading-4">Level:</label>
          <div className="relative">
            <select id="level" className="h-5 w-[94px] appearance-none bg-white pl-1 text-[12px] leading-none"><option>1 : Top</option></select>
            <span className="pointer-events-none absolute top-2.5 right-1"><Caret /></span>
          </div>
        </div>
        <StatusButton width="w-[60px]">Attributes</StatusButton>
        <StyleSelect label="Point style" width="w-9">
          <svg viewBox="0 0 10 10" className="size-2.5" stroke="#111"><path d="M0 5h10M5 0v10M2 8l6-6" /></svg>
        </StyleSelect>
        <StyleSelect label="Line style" width="w-[60px]">
          <svg viewBox="0 0 40 4" className="h-1 w-10"><path d="M0 1h4v3H0zM15 1h10v3H15zM35 1h4v3h-4z" /></svg>
        </StyleSelect>
        <StyleSelect label="Line width" width="w-[66px]">
          <span className="h-px w-[44px] bg-black" />
        </StyleSelect>
        <StatusButton width="w-[38px]">WCS</StatusButton>
        <StatusButton width="w-[52px]">Groups</StatusButton>
        <StatusButton width="w-[11px]">!</StatusButton>
        <StatusButton width="w-[9px]">?</StatusButton>
      </div>
    </footer>
  );
}

/* edge of the window that sits behind this one */
function BackWindow() {
  return (
    <aside aria-hidden="true" className="flex w-2 shrink-0 flex-col overflow-hidden border-l border-white bg-[#f0f0f0]">
      <div className="h-[26px] border-t-3 border-b border-t-white border-b-[#555] bg-[#c9452f]" />
      <div className="h-[21px] border-b border-[#8f93a0] bg-[#d6def0]" />
      <div className="h-[91px] border-b border-[#9a9a9a] bg-linear-to-b from-white to-[#d3daed] to-10%" />
      <div className="h-[31px] border-b border-[#9a9a9a]" />
      <div className="flex h-[63px] items-center"><Glyph name="sphere" size="-ml-3 -mt-4 size-4" /></div>
      <div className="h-4 bg-[#c0402c]" />
      <div className="mt-1 h-[22px] border-y border-[#8f93a0] bg-[#dde3f2]" />
      <div className="h-[92px] border-b border-[#9a9a9a] bg-linear-to-b from-white to-[#d3daed] to-15%" />
      <div className="flex h-[270px] flex-col gap-1.5 border-b border-[#a8acb8] pt-12">
        <Glyph name="fourWay" size="-ml-3 size-4" />
        <Glyph name="cubeOlive" size="-ml-3 size-4" />
        <Glyph name="sphere" size="-ml-3 size-4" />
      </div>
      <div className="flex flex-1 flex-col gap-1.5 pt-3">
        <Glyph name="plus" size="-ml-3 size-4" />
        <Glyph name="qSurf" size="-ml-3 size-4" />
        <Glyph name="qLine" size="-ml-3 size-4" />
        <Glyph name="qArc" size="-ml-3 size-4" />
        <Glyph name="qGrid" size="-ml-3 size-4" />
      </div>
    </aside>
  );
}

export default function App() {
  return (
    <div className="flex h-screen min-h-[640px] overflow-hidden bg-white font-['Open_Sans','Noto_Sans',sans-serif] text-black">
      <div className="flex min-w-0 flex-1 flex-col">
        <TitleBar />
        <nav className="flex h-[21px] items-center gap-3 overflow-hidden border-b border-[#9a9eac] bg-linear-to-b from-white via-[#e2e7f2] to-[#d5ddf2] text-[12px]">
          {menus.map((menu, i) => (
            <a key={menu} href="#" className={clsx("whitespace-nowrap", i === 0 && "-ml-1")}>{menu}</a>
          ))}
        </nav>
        <div className="bg-linear-to-b from-white to-[#d4dbee] to-12%">
          <div className="flex">
            <div className="-ml-0.5 flex">
              <ToolGroup items={fileTools} grip={false} />
            </div>
            {viewBars.map((items, i) => <ToolGroup key={i} items={items} />)}
          </div>
          <div className="flex">
            <ToolGroup items={createTools} grip={false} />
            {xformBars.map((items, i) => <ToolGroup key={i} items={items} />)}
          </div>
          <SelectionBar />
        </div>
        <div className="flex h-8 shrink-0 items-center border-y border-[#9a9a9a] bg-[#f0f0f0] pl-[175px] font-['Liberation_Sans',Arial,sans-serif] text-[11px]">
          Ribbon Bar
        </div>
        <div className="flex min-h-0 flex-1">
          <SolidsToolbar />
          <OperationsManager />
          <Viewport />
          <QuickMasks />
        </div>
        <StatusBar />
        <div className="h-[31px] shrink-0 border-l border-[#333] bg-white" />
      </div>
      <BackWindow />
    </div>
  );
}
